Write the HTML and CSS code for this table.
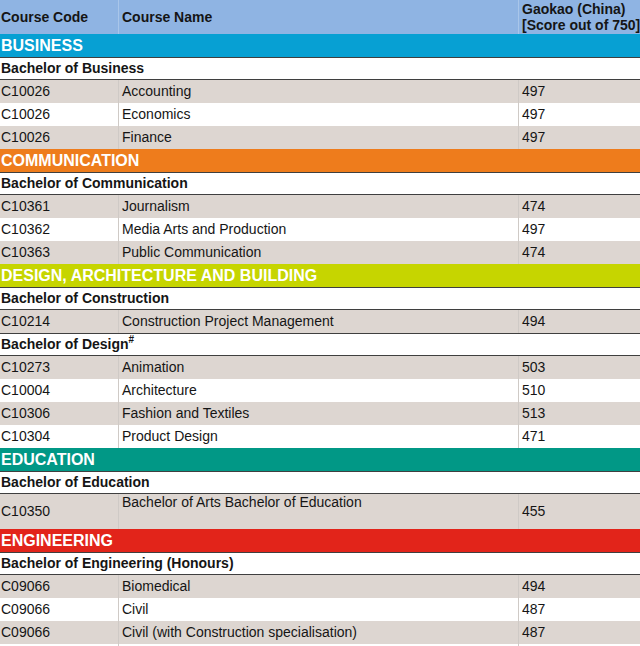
FILE: index.html
```html
<!DOCTYPE html>
<html lang="en">
	<head>
		<meta charset="UTF-8" />
		<meta name="viewport" content="width=device-width, initial-scale=1.0" />
		<title>Courses</title>
		<link rel="stylesheet" href="styles.css">
	</head>
	<body>
		<table class="courses">
			<colgroup>
				<col class="col-code" />
				<col class="col-name" />
				<col class="col-score" />
			</colgroup>
			<thead>
				<tr class="head-row">
					<th>Course Code</th>
					<th>Course Name</th>
					<th class="score-head">Gaokao (China)<br />[Score out of 750]</th>
				</tr>
			</thead>
			<tbody>
				<tr class="band band-business"><td colspan="3">BUSINESS</td></tr>
				<tr class="degree"><td colspan="3">Bachelor of Business</td></tr>
				<tr class="shade"><td>C10026</td><td>Accounting</td><td>497</td></tr>
				<tr><td>C10026</td><td>Economics</td><td>497</td></tr>
				<tr class="shade"><td>C10026</td><td>Finance</td><td>497</td></tr>

				<tr class="band band-communication"><td colspan="3">COMMUNICATION</td></tr>
				<tr class="degree"><td colspan="3">Bachelor of Communication</td></tr>
				<tr class="shade"><td>C10361</td><td>Journalism</td><td>474</td></tr>
				<tr><td>C10362</td><td>Media Arts and Production</td><td>497</td></tr>
				<tr class="shade"><td>C10363</td><td>Public Communication</td><td>474</td></tr>

				<tr class="band band-design"><td colspan="3">DESIGN, ARCHITECTURE AND BUILDING</td></tr>
				<tr class="degree"><td colspan="3">Bachelor of Construction</td></tr>
				<tr class="shade"><td>C10214</td><td>Construction Project Management</td><td>494</td></tr>
				<tr class="degree"><td colspan="3">Bachelor of Design<sup>#</sup></td></tr>
				<tr class="shade"><td>C10273</td><td>Animation</td><td>503</td></tr>
				<tr><td>C10004</td><td>Architecture</td><td>510</td></tr>
				<tr class="shade"><td>C10306</td><td>Fashion and Textiles</td><td>513</td></tr>
				<tr><td>C10304</td><td>Product Design</td><td>471</td></tr>

				<tr class="band band-education"><td colspan="3">EDUCATION</td></tr>
				<tr class="degree"><td colspan="3">Bachelor of Education</td></tr>
				<tr class="shade tall"><td>C10350</td><td class="top">Bachelor of Arts Bachelor of Education</td><td>455</td></tr>

				<tr class="band band-engineering"><td colspan="3">ENGINEERING</td></tr>
				<tr class="degree"><td colspan="3">Bachelor of Engineering (Honours)</td></tr>
				<tr class="shade"><td>C09066</td><td>Biomedical</td><td>494</td></tr>
				<tr><td>C09066</td><td>Civil</td><td>487</td></tr>
				<tr class="shade"><td>C09066</td><td>Civil (with Construction specialisation)</td><td>487</td></tr>
				<tr><td></td><td></td><td></td></tr>
			</tbody>
		</table>
	</body>
</html>
```

FILE: styles.css
```css
body {
	margin: 0;
	background: #fff;
	font-family: "Liberation Sans", Arial, sans-serif;
	color: #151515;
}
.courses {
	width: 640px;
	table-layout: fixed;
	border-collapse: separate;
	border-spacing: 0;
	font-size: 14px;
}
.col-code {
	width: 118px;
}
.col-name {
	width: 400px;
}
.col-score {
	width: 122px;
}
.courses td,
.courses th {
	padding: 0 0 0 1px;
	height: 23px;
	line-height: 23px;
	white-space: nowrap;
	overflow: hidden;
	text-align: left;
}
.head-row th {
	background: #8fb4e3;
	height: 34px;
	line-height: 16px;
	font-weight: bold;
	vertical-align: middle;
}
.head-row th + th {
	border-left: 1px solid #a9c6ea;
	padding-left: 3px;
}
.band td {
	color: #fff;
	font-weight: bold;
	font-size: 16px;
}
.band-business td {
	background: #07a0d3;
}
.band-communication td {
	background: #ee7c1c;
}
.band-design td {
	background: #c6d500;
}
.band-education td {
	background: #019886;
}
.band-engineering td {
	background: #e2241a;
}
.degree td {
	background: #fff;
	font-weight: bold;
	height: 21px;
	line-height: 21px;
	border-top: 1px solid #3f3f3f;
	border-bottom: 1px solid #3f3f3f;
}
.degree sup {
	font-size: 10px;
	line-height: 0;
	vertical-align: 6px;
}
tbody tr:not(.band):not(.degree) td + td {
	border-left: 1px solid #cfcac6;
	padding-left: 3px;
}
.shade td {
	background: #ddd6d1;
}
.tall td {
	height: 35px;
	vertical-align: middle;
}
.tall td.top {
	vertical-align: top;
	line-height: 16px;
}
```
